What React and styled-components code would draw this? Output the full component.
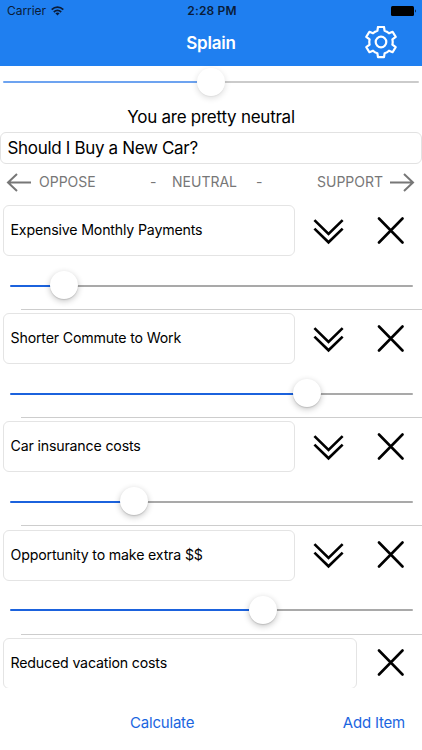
import React from "react";
import styled, { createGlobalStyle } from "styled-components";

const GlobalStyle = createGlobalStyle`
  * { box-sizing: border-box; }
  body {
    margin: 0;
    background: #fff;
    font-family: Inter, "Liberation Sans", sans-serif;
    overflow: hidden;
  }
`;

const Screen = styled.div`
  width: 422px;
  height: 750px;
  display: flex;
  flex-direction: column;
  background: #fff;
  color: #000;
  overflow: hidden;
`;

const Header = styled.header`
  flex: none;
  height: 65.5px;
  background: #1f7ff0;
`;

const StatusBar = styled.div`
  display: grid;
  grid-template-columns: 1fr auto 1fr;
  align-items: center;
  height: 22px;
  padding: 0 5px 0 7px;
  font-size: 12px;
  line-height: 22px;
  color: #0a1c38;
`;

const Carrier = styled.div`
  display: flex;
  align-items: center;
  gap: 5px;
  letter-spacing: -0.05px;
`;

const Clock = styled.div`
  font-weight: 600;
  letter-spacing: 0.15px;
`;

const Battery = styled.svg`
  justify-self: end;
`;

const NavBar = styled.div`
  display: grid;
  grid-template-columns: 1fr auto 1fr;
  align-items: center;
  height: 40px;
  padding-right: 23px;
  padding-left: 23px;
`;

const Title = styled.h1`
  grid-column: 2;
  margin: 0;
  color: #fff;
  font-size: 17px;
  font-weight: 600;
  line-height: 42px;
  letter-spacing: -0.2px;
`;

const IconButton = styled.button`
  display: flex;
  align-items: center;
  justify-content: center;
  justify-self: end;
  width: ${(p) => p.$size}px;
  height: ${(p) => p.$size}px;
  padding: 0;
  border: 0;
  background: none;
`;

const Overall = styled.section`
  flex: none;
  height: 66.5px;
  padding: 2px 3px 0;
`;

const Verdict = styled.p`
  margin: 8px 0 0;
  text-align: center;
  font-size: 17px;
  line-height: 24px;
  letter-spacing: -0.25px;
`;

const SliderBox = styled.div`
  position: relative;
  display: flex;
  align-items: center;
  height: 29px;
`;

const Track = styled.div`
  flex: 1;
  height: 2px;
  border-radius: 1px;
  background: ${(p) => (p.$muted ? "#cbcbcb" : "#a9a9a9")};
`;

const Fill = styled.div`
  height: 2px;
  border-radius: 1px;
  background: ${(p) => (p.$muted ? "#6da3f0" : "#1b62dd")};
`;

const Thumb = styled.div`
  position: absolute;
  top: 0;
  width: 28px;
  height: 28px;
  margin-left: -14px;
  border-radius: 50%;
  background: #fff;
  box-shadow: ${(p) =>
    p.$muted
      ? "0 2px 6px rgba(0, 0, 0, 0.14), 0 1px 1px rgba(0, 0, 0, 0.04)"
      : "0 2px 6px rgba(0, 0, 0, 0.24), 0 1px 1px rgba(0, 0, 0, 0.12)"};
`;

const Question = styled.div`
  flex: none;
  height: 32px;
  padding-left: 6.5px;
  border: 1px solid #e2e2e2;
  border-radius: 6px;
  font-size: 17px;
  line-height: 30px;
  letter-spacing: -0.33px;
`;

const Scale = styled.div`
  flex: none;
  display: grid;
  grid-template-columns: 33px 111px 22px 84px 61px 73px 1fr;
  align-items: center;
  height: 38px;
  padding-left: 6px;
  padding-bottom: 3px;
  font-size: 14px;
  line-height: 34px;
  color: #777;
`;

const List = styled.ul`
  flex: none;
  height: 486px;
  margin: 0;
  padding: 0;
  list-style: none;
  overflow: hidden;
`;

const Item = styled.li`
  height: 108.2px;
  padding-top: 3px;
`;

const ItemTop = styled.div`
  display: flex;
  align-items: center;
  height: 51px;
  padding: 0 15px 0 3px;
`;

const Field = styled.div`
  flex: 1;
  height: 51px;
  padding-left: 6.5px;
  border: 1px solid #e4e4e4;
  border-radius: 6px;
  font-size: 14.2px;
  line-height: 48px;
  letter-spacing: -0.18px;
`;

const Actions = styled.div`
  display: flex;
  justify-content: space-between;
  width: ${(p) => (p.$wide ? 94 : 32)}px;
  margin-left: 18px;
`;

const ItemSlider = styled.div`
  padding: 15px 9.5px 0;
`;

const Divider = styled.div`
  height: 1px;
  margin: 9px 0 0 21px;
  background: #cdcdcd;
`;

const Footer = styled.footer`
  flex: 1;
  display: flex;
  justify-content: space-between;
  align-items: center;
  padding: 8px 17px 0 130px;
`;

const Action = styled.button`
  padding: 0;
  border: 0;
  background: none;
  color: #1b66df;
  font: 15px/30px Inter, "Liberation Sans", sans-serif;
  letter-spacing: -0.2px;
`;

function Slider({ value, muted }) {
  return (
    <SliderBox>
      <Fill $muted={muted} style={{ width: `${value}%` }} />
      <Track $muted={muted} />
      <Thumb $muted={muted} style={{ left: `${value}%` }} />
    </SliderBox>
  );
}

const GearIcon = () => (
  <svg width="34" height="34" viewBox="-17 -16 34 34" fill="none" stroke="#fff" strokeWidth="2.2" strokeLinejoin="round">
    <path d="M-3 -15H3L3.6 -11.3Q6 -10.6 8 -8.7L11.6 -10.2L14.7 -5.1L11.4 -2.6Q12 0 11.4 2.6L14.7 5.1L11.6 10.2L8 8.7Q6 10.6 3.6 11.3L3 15.2H-3L-3.6 11.3Q-6 10.6 -8 8.7L-11.6 10.2L-14.7 5.1L-11.4 2.6Q-12 0 -11.4 -2.6L-14.7 -5.1L-11.6 -10.2L-8 -8.7Q-6 -10.6 -3.6 -11.3Z" />
    <circle r="5.3" />
  </svg>
);

const WifiIcon = () => (
  <svg width="13" height="10" viewBox="0 0 13 10" fill="none" stroke="#0a1c38" strokeWidth="1.7">
    <path d="M0.7 3.6C4 0.4 9 0.4 12.3 3.6M2.8 6C5 4 8 4 10.2 6" />
    <path d="M4.4 7.3Q6.5 5.8 8.6 7.3L6.5 9.5Z" fill="#0a1c38" stroke="none" />
  </svg>
);

const ArrowIcon = ({ right }) => (
  <svg width="26" height="20" viewBox="0 0 26 20" fill="none" stroke="#777" strokeWidth="2">
    <path d={right ? "M0 10.5H23M14 2L23 10.5L14 19" : "M25 10.5H2M11 2L2 10.5L11 19"} />
  </svg>
);

const ExpandIcon = () => (
  <svg width="34" height="28" viewBox="0 0 34 28" fill="none" stroke="#000" strokeWidth="2.8">
    <path d="M1.5 2.5L16.5 17L31.5 2.5M1.5 11.5L16.5 26L31.5 11.5" />
  </svg>
);

const RemoveIcon = () => (
  <svg width="28" height="28" viewBox="0 0 28 28" stroke="#000" strokeWidth="2.6" strokeLinecap="round">
    <path d="M2 1.5L25.5 25.5M25.5 1.5L2 25.5" />
  </svg>
);

const items = [
  { text: "Expensive Monthly Payments", value: 13.5, expandable: true },
  { text: "Shorter Commute to Work", value: 73.8, expandable: true },
  { text: "Car insurance costs", value: 30.8, expandable: true },
  { text: "Opportunity to make extra $$", value: 62.9, expandable: true },
  { text: "Reduced vacation costs", value: 50, expandable: false },
];

export default function App() {
  return (
    <Screen>
      <GlobalStyle />
      <Header>
        <StatusBar>
          <Carrier>
            Carrier
            <WifiIcon />
          </Carrier>
          <Clock>2:28 PM</Clock>
          <Battery width="26" height="10" viewBox="0 0 26 10">
            <rect width="23" height="10" rx="1.5" />
            <path d="M24 3.2Q25.8 5 24 6.8Z" />
          </Battery>
        </StatusBar>
        <NavBar>
          <Title>Splain</Title>
          <IconButton $size={36} aria-label="Settings">
            <GearIcon />
          </IconButton>
        </NavBar>
      </Header>
      <Overall>
        <Slider value={50} muted />
        <Verdict>You are pretty neutral</Verdict>
      </Overall>
      <Question>Should I Buy a New Car?</Question>
      <Scale>
        <ArrowIcon />
        <span>OPPOSE</span>
        <span>-</span>
        <span>NEUTRAL</span>
        <span>-</span>
        <span>SUPPORT</span>
        <ArrowIcon right />
      </Scale>
      <List>
        {items.map((item) => (
          <Item key={item.text}>
            <ItemTop>
              <Field>{item.text}</Field>
              <Actions $wide={item.expandable}>
                {item.expandable && (
                  <IconButton $size={32} aria-label="Expand">
                    <ExpandIcon />
                  </IconButton>
                )}
                <IconButton $size={32} aria-label="Remove">
                  <RemoveIcon />
                </IconButton>
              </Actions>
            </ItemTop>
            <ItemSlider>
              <Slider value={item.value} />
            </ItemSlider>
            <Divider />
          </Item>
        ))}
      </List>
      <Footer>
        <Action>Calculate</Action>
        <Action>Add Item</Action>
      </Footer>
    </Screen>
  );
}
